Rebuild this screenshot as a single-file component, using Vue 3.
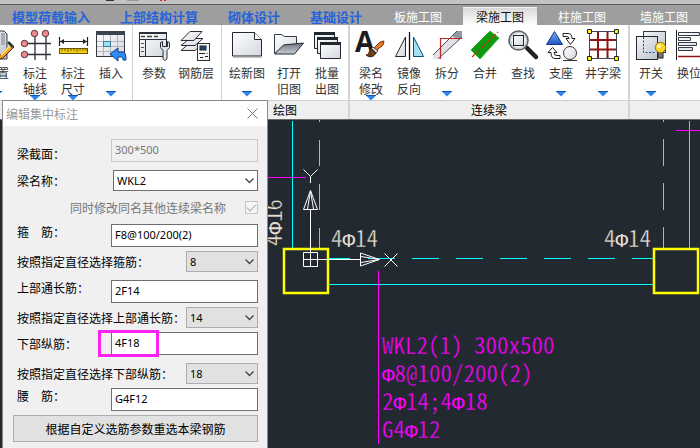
<script setup>
import { ref } from 'vue'

const tabs = [
  { name: '模型荷载输入', kind: 'module wide' },
  { name: '上部结构计算', kind: 'module wide' },
  { name: '砌体设计', kind: 'module' },
  { name: '基础设计', kind: 'module' },
  { name: '板施工图', kind: '' },
  { name: '梁施工图', kind: 'active' },
  { name: '柱施工图', kind: '' },
  { name: '墙施工图', kind: '' },
]

const icons = {
  setup: '<path d="M4 1h18l3 3v25H4z" fill="url(#steel)" stroke="#333a44"/><rect x="19" y="3" width="4" height="12" fill="#a9adb3"/><path d="M8 22h8" stroke="#555"/><path d="M29 14L18 25l-3 5 6-2 11-11z" fill="#f59a23" stroke="#3a2a1a"/><path d="M25 13l2-2 5 5-2 2z" fill="#343434"/><path d="M19 25l9-9" stroke="#ffe08a" stroke-width="2"/>',
  axis: '<path d="M15 6v24M26 6v24M7 13.500h24M7 24.500h24" stroke="#2b3038" stroke-width="1.300"/><g fill="#f58a8a" stroke="#4a3038"><circle cx="14.500" cy="3.500" r="3.200"/><circle cx="25.500" cy="3.500" r="3.200"/><circle cx="4.500" cy="13.500" r="3.200"/><circle cx="4.500" cy="24.500" r="3.200"/></g>',
  size: '<path d="M1.500 7v9M29.500 7v9M2 11.500h27" stroke="#222" stroke-width="1.200"/><path d="M2 11.500l4-2.500v5zM29 11.500l-4-2.500v5z" fill="#222"/><rect x="1.500" y="18.500" width="28" height="5" fill="#f2cc16" stroke="#6b5600"/><path d="M4 19v2M7 19v2M10 19v3M13 19v2M16 19v2M19 19v3M22 19v2M25 19v2M28 19v2" stroke="#5b4a00" stroke-width=".8"/>',
  insert: '<rect x=".5" y="1.500" width="28" height="25" fill="url(#paper)" stroke="#333a44"/><path d="M0 1h29v4H0z" fill="#3b434f"/><path d="M1 11.500h27M1 16.500h27M1 21.500h27M7.500 5v21M14.500 5v21M21.500 5v21" stroke="#aeb6c0"/><rect x="7.500" y="11.500" width="7" height="5" fill="#9fdcf2" stroke="#3b7ea0"/><path d="M14 24l8-6v4h4c3 0 4 2 4 8h-3c0-3-1-3-3-3h-2v4z" fill="#2f8cf0" stroke="#0d3d86"/>',
  params: '<rect x=".5" y="2.500" width="27" height="24" fill="url(#paper)" stroke="#2b3038"/><path d="M0 2h28v2H0z" fill="#2b3038"/><path d="M1 9.500h26M6.500 10v16" stroke="#2b3038"/><path d="M2 6.500h4M8 6.500h5M15 6.500h4" stroke="#444" stroke-width="1.500"/><path d="M2 13.500h3M2 17.500h3M2 21.500h3" stroke="#555"/><path d="M21.500 12.500v5l2.500 3v7.500c0 3 4 3 4 0v-7.500l2.500-3v-5l-2-1v5h-5v-5z" fill="#dde5ee" stroke="#2b3038"/>',
  layers: '<g fill="url(#paper)" stroke="#2b3038"><path d="M0 20.500l8-7h14l-8 7z"/><path d="M0 15.500l9-7h13l-8 7z"/><path d="M0 10.500l9-9h12l-8 9z"/></g><rect x="16.500" y="13.500" width="12" height="17" fill="#f4f6f8" stroke="#2b3038"/><rect x="19" y="16" width="6" height="4" fill="#1e4c86" stroke="#222"/><path d="M18 23.500h6M26 23v1M19 27.500h3M24 26.500h3" stroke="#222"/>',
  page: '<path d="M.5 2.500h22l7 7v16.500H.5z" fill="url(#paper)" stroke="#222830"/><path d="M22.500 2.500v7h7" fill="#fff" stroke="#222830"/><path d="M1 27.500h29" stroke="#c0c3c8"/>',
  open: '<path d="M.5 23V4.500h7l3 2H22.500V16z" fill="url(#paper)" stroke="#333a44"/><path d="M.5 24l9-9 20-2-9 11z" fill="url(#dark)" stroke="#222830"/>',
  batch: '<g fill="url(#paper)" stroke="#222830"><path d="M2.500 2.500h20v16h-20z"/><path d="M2 3.500h21" stroke-width="3"/><path d="M5.500 7.500h20v16h-20z"/><path d="M5 8.500h21" stroke-width="3"/><path d="M8.500 12.500h20v16h-20z"/><path d="M8 13.500h21" stroke-width="3"/></g>',
  name: '<text x="-1" y="22" font-size="28" font-weight="700" font-family="Open Sans, sans-serif" fill="#1c1c1c">A</text><path d="M18 18l6-6 4-1-1 4-6 5z" fill="#f07b22" stroke="#6d3411"/><path d="M17 17l5 4-2 2-5-4z" fill="#d8dde2" stroke="#555"/><path d="M10 25c4 0 2-5 6-6l4 4c-2 4-6 5-10 2z" fill="#6d3a1a" stroke="#3a1c0a"/>',
  mirror: '<path d="M1.500 26.500L11.500 7v19.500z" fill="url(#paper)" stroke="#222830"/><path d="M15.500 2v28" stroke="#111" stroke-width="1.300"/><path d="M19.500 7v19.500H29.500z" fill="#a5dff0" stroke="#075083"/>',
  split: '<path d="M1 25L22 4l8 3L7 29H1z" fill="#dfe1e4"/><path d="M20 6l5-5h5v6l-3 3z" fill="#9299a2"/><path d="M1 25L25 1M6 29L30 7" stroke="#4a515b"/><path d="M8.500 29V8.500H30" fill="none" stroke="#c22222" stroke-width="1.200"/>',
  merge: '<path d="M1 20L20 1l9 7L10 29z" fill="#0d9a10" stroke="#2bb52c"/><path d="M2 27L28 2" stroke="#c3331a" stroke-width="1.200" stroke-dasharray="7 2 2 2"/>',
  find: '<path d="M19 18l9 9" stroke="#222" stroke-width="4.500" stroke-linecap="round"/><circle cx="10.500" cy="10.500" r="9.500" fill="#eef2f2" stroke="#5a6268" stroke-width="1.600"/><circle cx="10.500" cy="10.500" r="8" fill="none" stroke="#b7c4c4"/><rect x="5.500" y="5.500" width="10" height="10" fill="url(#paper)" stroke="#222"/>',
  support: '<path d="M.5 14.500L8.500 1.500 16.500 14.500z" fill="url(#blue)" stroke="#143a86"/><circle cx="24" cy="23" r="6.500" fill="url(#paper)" stroke="#333"/><path d="M17 30.500h14" stroke="#333"/><path d="M17 3.500h5q4 0 4 5h3l-4.500 6-4.500-6h3q0-2-3-2h-3z" fill="#fff" stroke="#222"/><path d="M14 28.500H9q-4 0-4-6H2l4.500-5 4.500 5H8q0 3 3 3h3z" fill="#fff" stroke="#222"/>',
  grid: '<rect x="1.500" y="1.500" width="27" height="27" fill="#fff" stroke="#3d4456"/><path d="M10 2v26M19.500 2v26M2 10h26M2 19.500h26" stroke="#8d1515" stroke-width="2"/><g fill="#fff200" stroke="#222"><path d="M-.5-.5h4v4h-4zM26.500-.5h4v4h-4zM-.5 26.500h4v4h-4zM26.500 26.500h4v4h-4z"/></g>',
  toggle: '<rect x="7.500" y="1.500" width="22" height="21" fill="url(#steel)" stroke="#333a44"/><rect x=".5" y="6.500" width="21" height="23" fill="url(#steel)" stroke="#222830"/><path d="M7.500 7v15.500H20" fill="none" stroke="#1848a8" stroke-dasharray="2 1.500"/><path d="M7.500 6V1.500H29.500V22" fill="none" stroke="#333a44"/><rect x="22" y="22" width="5" height="6" fill="#777" stroke="#222"/><circle cx="24.500" cy="17.500" r="5.200" fill="#ffd429" stroke="#a06b00"/><circle cx="23" cy="16" r="2" fill="#fff6b0"/>',
  swap: '<path d="M2.500 0v30" stroke="#222"/><g fill="url(#paper)" stroke="#333a44"><path d="M4.500 2.500h21v3h-21zM4.500 7.500h12v3h-12zM4.500 12.500h18v3h-18zM4.500 17.500h14v3h-14z"/></g><path d="M4 26.500h24" stroke="#8d1515" stroke-width="1.500"/>',
}

const groups = [
  { title: '', buttons: [
    { icon: 'setup', lines: ['设置'], menu: true },
    { icon: 'axis', lines: ['标注', '轴线'], menu: true },
    { icon: 'size', lines: ['标注', '尺寸'], menu: true },
    { icon: 'insert', lines: ['插入'], menu: true },
  ] },
  { title: '', buttons: [
    { icon: 'params', lines: ['参数'] },
    { icon: 'layers', lines: ['钢筋层'] },
  ] },
  { title: '绘图', edge: true, buttons: [
    { icon: 'page', lines: ['绘新图'], menu: true },
    { icon: 'open', lines: ['打开', '旧图'] },
    { icon: 'batch', lines: ['批量', '出图'] },
  ] },
  { title: '连续梁', edge: true, buttons: [
    { icon: 'name', lines: ['梁名', '修改'], menu: true },
    { icon: 'mirror', lines: ['镜像', '反向'] },
    { icon: 'split', lines: ['拆分'], menu: true },
    { icon: 'merge', lines: ['合并'] },
    { icon: 'find', lines: ['查找'] },
    { icon: 'support', lines: ['支座'], menu: true },
    { icon: 'grid', lines: ['井字梁'], menu: true },
  ] },
  { title: '', buttons: [
    { icon: 'toggle', lines: ['开关'], menu: true },
    { icon: 'swap', lines: ['换位'] },
  ] },
]

const fields = ref([
  { id: 'section', label: '梁截面：', type: 'text', value: '300*500', disabled: true, align: 'low', loose: true },
  { id: 'beam', label: '梁名称：', type: 'combo', value: 'WKL2', options: ['WKL1', 'WKL2', 'WKL3'], loose: true },
  { id: 'sync', label: '同时修改同名其他连续梁名称', type: 'check', value: true, loose: true },
  { id: 'stirrup', label: '箍　筋：', type: 'text', value: 'F8@100/200(2)', align: 'high' },
  { id: 'stirrup-d', label: '按照指定直径选择箍筋：', type: 'select', value: '8', options: ['6', '8', '10'], loose: true },
  { id: 'top', label: '上部通长筋：', type: 'text', value: '2F14', align: 'high' },
  { id: 'top-d', label: '按照指定直径选择上部通长筋：', type: 'select', value: '14', options: ['12', '14', '16'] },
  { id: 'bottom', label: '下部纵筋：', type: 'text', value: '4F18', marked: true, loose: true },
  { id: 'bottom-d', label: '按照指定直径选择下部纵筋：', type: 'select', value: '18', options: ['16', '18', '20'] },
  { id: 'waist', label: '腰　筋：', type: 'text', value: 'G4F12', align: 'high' },
])

// The diameter sign is set in its own narrower face.
const runs = (text) => text.split(/(Φ)/).filter(Boolean)
const notes = ['WKL2(1) 300x500', 'Φ8@100/200(2)', '2Φ14;4Φ18', 'G4Φ12'].map(runs)
const bars = [
  { at: 'translate(331 247)', parts: runs('4Φ14') },
  { at: 'translate(604 247)', parts: runs('4Φ14') },
  { at: 'translate(282 246) rotate(-90)', parts: runs('4Φ16') },
]
</script>

<template>
  <main class="app">
    <div class="topbar">
      <svg width="200" height="3" aria-hidden="true">
        <path d="M106 0h8v1h-8z" fill="#333" /><path d="M127 0h12v1h-12z" fill="#999" /><path d="M160 0h2v1h-2zM164 0h2v1h-2z" fill="#d22" />
      </svg>
    </div>
    <nav class="tabs">
      <a v-for="t in tabs" :key="t.name" href="#" class="tab" :class="t.kind">{{ t.name }}</a>
    </nav>

    <div class="ribbon">
      <section v-for="(g, i) in groups" :key="i" class="group" :class="{ edge: g.edge, last: i === groups.length - 1 }">
        <div class="tools">
          <button v-for="b in g.buttons" :key="b.icon" type="button" class="tool" :class="{ broad: b.lines[0].length > 2 }">
            <svg class="icon" width="30" height="30" viewBox="0 0 30 30" aria-hidden="true" v-html="icons[b.icon]"></svg>
            <span class="caption"><span v-for="l in b.lines" :key="l">{{ l }}</span></span>
            <svg v-if="b.menu" class="drop" width="10" height="6" viewBox="0 0 10 6" aria-hidden="true">
              <path d="M0 .5h10L5 5.500z" fill="#2f86ee" /><path d="M0 .5h10" stroke="#1557b0" />
            </svg>
          </button>
        </div>
        <div class="title">{{ g.title }}</div>
      </section>
    </div>

    <div class="drawing">
      <svg class="canvas" aria-label="梁施工图">
        <defs>
          <linearGradient id="paper" x1="0" y1="0" x2="1" y2="1"><stop offset="0" stop-color="#fff" /><stop offset="1" stop-color="#d3d7de" /></linearGradient>
          <linearGradient id="steel" x1="0" y1="0" x2="1" y2="1"><stop offset="0" stop-color="#f3f5f8" /><stop offset="1" stop-color="#bcc3cd" /></linearGradient>
          <linearGradient id="dark" x1="0" y1="0" x2="0" y2="1"><stop offset="0" stop-color="#6d7681" /><stop offset="1" stop-color="#c8cdd3" /></linearGradient>
          <linearGradient id="blue" x1="0" y1="0" x2="0" y2="1"><stop offset="0" stop-color="#7fb0f5" /><stop offset="1" stop-color="#1e55c4" /></linearGradient>
        </defs>
        <g transform="translate(0 -120)" fill="none">
          <g class="rebar">
            <text v-for="b in bars" :key="b.at" :transform="b.at"><tspan v-for="(p, k) in b.parts" :key="k" :class="{ dia: p === 'Φ' }">{{ p }}</tspan></text>
          </g>
          <g class="note">
            <text v-for="(n, i) in notes" :key="i" x="382" :y="354 + i * 28"><tspan v-for="(p, k) in n" :key="k" :class="{ dia: p === 'Φ' }">{{ p }}</tspan></text>
          </g>
          <g class="beam">
            <path d="M292.500 121V249M689.500 121V249M328 284.500H654" />
            <path d="M319.500 120v2M319.500 140v26M319.500 184v26M319.500 228v21M663.500 120v2M663.500 139v27M663.500 183v27M663.500 227v22" />
            <path d="M328 258.500h22M368 258.500h27M412 258.500h27M456 258.500h27M500 258.500h27M544 258.500h27M588 258.500h27M632 258.500h22" />
          </g>
          <path class="leader" d="M266 177.500H306M676 130.500H700M378.500 271V444" />
          <rect class="column" x="284" y="249" width="44" height="44" />
          <rect class="column" x="654" y="249" width="44" height="44" />
          <g class="ucs">
            <path d="M303.500 252.500h14v14h-14zM310.500 209v57M303.500 259.500H360" />
            <path d="M310.500 190.500L303.500 209.500h14zM310.500 191L307.500 209M310.500 191L313.500 209" />
            <path d="M379.500 259.500L360.500 253v13zM379 259.500L361 256.500M379 259.500L361 262.500" />
            <path d="M303.500 169.500L310.500 176.500L317.500 169.500M310.500 176.500V183M384.500 253.500L397.500 266.500M397.500 253.500L384.500 266.500" />
          </g>
        </g>
      </svg>
    </div>

    <form class="dialog" @submit.prevent>
      <header class="head">
        <h1>编辑集中标注</h1>
        <button type="button" class="close" aria-label="关闭">
          <svg width="11" height="11" viewBox="0 0 11 11"><path d="M.5.5l10 10M10.500.5l-10 10" stroke="#777" /></svg>
        </button>
      </header>
      <div class="body">
        <div v-for="f in fields" :key="f.id" class="row" :class="[f.type, f.align, { loose: f.loose }]">
          <label :for="f.id">{{ f.label }}</label>
          <input v-if="f.type === 'text'" :id="f.id" v-model="f.value" type="text" :disabled="f.disabled" />
          <input v-else-if="f.type === 'check'" :id="f.id" v-model="f.value" type="checkbox" disabled />
          <span v-else class="pick">
            <select :id="f.id" v-model="f.value"><option v-for="o in f.options" :key="o">{{ o }}</option></select>
            <svg width="9" height="6" viewBox="0 0 9 6" aria-hidden="true"><path d="M.5.5l4 4 4-4" fill="none" stroke="#444" stroke-width="1.300" /></svg>
          </span>
          <i v-if="f.marked" class="mark"></i>
        </div>
        <button type="submit" class="apply">根据自定义选筋参数重选本梁钢筋</button>
      </div>
    </form>
  </main>
</template>

<style>
body { background: #222930; }
</style>

<style scoped>
.app {
  position: relative;
  display: flex;
  flex-direction: column;
  height: 100vh;
  overflow: hidden;
  background: #222930;
  font: 12px/16px "Noto Sans CJK SC", sans-serif;
  color: #1a1a1a;
}
.app * { box-sizing: border-box; }
button, input, select { font: inherit; color: inherit; margin: 0; }

.topbar { flex: none; display: flex; height: 5px; background: #c2c2c2; border-bottom: 1px solid #5c5c5c; }
.tabs { flex: none; display: flex; height: 20px; padding-top: 3px; margin-left: -3px; background: #9e9e9e; }
.tab { flex: none; width: 82px; line-height: 17px; text-align: center; color: #fff; text-decoration: none; white-space: nowrap; }
.tab.wide { width: 108px; }
.tab.module { color: #2662dc; font-weight: 700; font-size: 13px; }
.tab.active { width: 74px; margin: 0 4px; color: #111; background: linear-gradient(#d8d8d8, #fff); box-shadow: 0 -1px #eee; }

.ribbon { flex: none; display: flex; margin-left: -22px; background: #efefef; border-bottom: 1px solid #6a6a6a; }
.group { flex: none; display: flex; flex-direction: column; }
.group.last { flex: 1; }
.tools { display: flex; height: 76px; padding: 0 2px; background: #fff; border-right: 1px solid #cfcfcf; border-bottom: 1px solid #cfcfcf; }
.group:first-child .tools { padding-left: 0; }
.group.edge { border-right: 2px solid #d4d4d4; }
.group.edge .tools { border-right: 0; }
.title { height: 18px; line-height: 18px; text-align: center; color: #000; }
.tool { flex: none; width: 38px; padding: 5px 0 0; border: 0; background: none; display: flex; flex-direction: column; align-items: center; }
.tool.broad { width: 46px; }
.icon { flex: none; overflow: visible; fill: none; }
.caption { flex: none; display: flex; flex-direction: column; min-height: 28px; margin: 5px 0 -2px; color: #333; white-space: nowrap; }
.drop { flex: none; }

.drawing { flex: 1; min-height: 0; overflow: hidden; }
.canvas { display: block; width: 100%; height: 100%; }
.beam { stroke: #0ff; }
.leader { stroke: #f0f; }
.column { stroke: #ff0; stroke-width: 2.5; }
.ucs { stroke: #fff; }
.rebar, .note { font-family: "Noto Sans Mono CJK SC", "Liberation Mono", monospace; font-size: 23px; white-space: pre; stroke: #222930; stroke-width: 0.4; }
.dia { font-family: "Liberation Mono", monospace; font-size: 21px; stroke: none; }
.rebar { fill: #e6ddd2; }
.note { fill: #f0f; }

.dialog { position: absolute; left: 2px; top: 100px; width: 266px; background: #f0f0f0; border: 1px solid #8a8a8a; }
.head { display: flex; justify-content: space-between; align-items: center; height: 25px; padding: 0 9px 0 3px; background: #fff; }
.head h1 { margin: 0; font-size: 12px; font-weight: 400; color: #999; }
.close { display: flex; padding: 0; border: 0; background: none; }
.body { padding: 13px 9px 8px 10px; }
.row { position: relative; display: flex; align-items: center; justify-content: space-between; margin-bottom: 4px; padding-left: 4px; color: #000; }
.row.loose { margin-bottom: 8px; }
.row.high { align-items: flex-start; }
.row.low { align-items: flex-end; }
.row label { white-space: nowrap; line-height: 16px; }
.row input[type="text"], .pick select { font-family: "Noto Sans", sans-serif; font-size: 11px; border-radius: 0; outline: 0; }
.row input[type="text"] { width: 147px; height: 23px; padding: 0 3px 3px; border: 1px solid #6f6f6f; background: #fff; }
.row input[type="text"]:disabled { color: #777; background: #f0f0f0; border-color: #c8c8c8; }
.pick { position: relative; display: flex; width: 72px; }
.pick select { width: 100%; height: 21px; padding: 0 3px; border: 1px solid #adadad; background: #e1e1e1; appearance: none; }
.combo .pick { width: 145px; }
.combo select { background: #fff; border-color: #6f6f6f; }
.pick svg { position: absolute; right: 4px; top: 8px; pointer-events: none; }
.row.check { height: 17px; justify-content: flex-end; gap: 19px; color: #777; }
.check input { appearance: none; width: 13px; height: 13px; border: 1px solid #c4c4c4; background: #f6f6f6; display: grid; place-items: center; }
.check input:checked::after { content: ""; width: 8px; height: 4px; border: solid #aaa; border-width: 0 0 1px 1px; rotate: -45deg; translate: 0 -1px; }
.mark { position: absolute; left: 85px; top: -2px; width: 61px; height: 27px; border: 3px solid #f823f0; pointer-events: none; }
.apply { display: block; width: 100%; height: 27px; padding: 0; border: 1px solid #adadad; background: #e1e1e1; color: #000; }
</style>
